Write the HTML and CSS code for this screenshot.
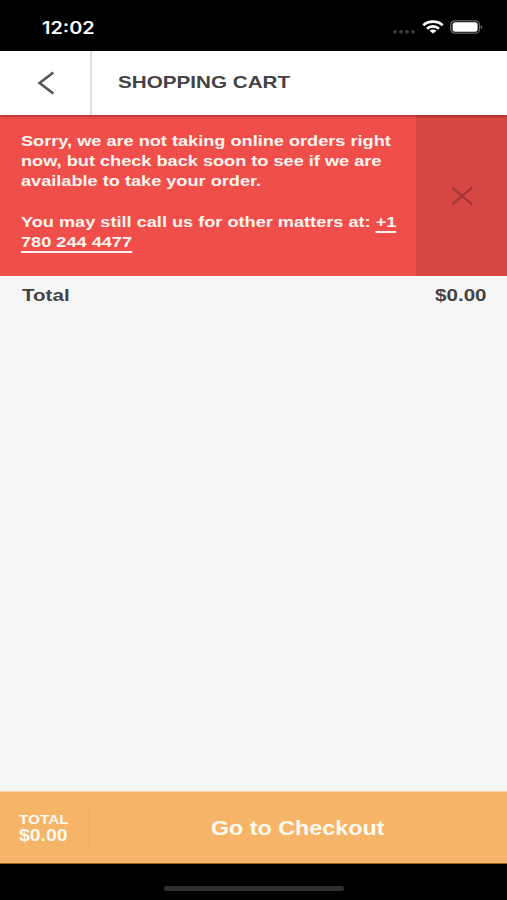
FILE: index.html
```html
<!DOCTYPE html>
<html lang="en">
<head>
<meta charset="utf-8">
<title>Shopping Cart</title>
<link rel="stylesheet" href="styles.css">
</head>
<body>
<div class="screen">
  <div class="status">
    <span class="wide time">12:02</span>
    <div class="indicators">
      <svg class="dots" width="24" height="6" viewBox="0 0 24 6" fill="#3c3c3c"><rect x="0" y="1" width="4" height="3.4" rx="1.5"/><rect x="6" y="1" width="4" height="3.4" rx="1.5"/><rect x="12" y="1" width="4" height="3.4" rx="1.5"/><rect x="18" y="1" width="4" height="3.4" rx="1.5"/></svg>
      <svg class="wifi" width="22" height="14" viewBox="0 0 22 14" fill="none" stroke="#fff" stroke-width="2.7"><path d="M1.3 5.2C6.500 .4 15.500 .4 20.700 5.200"/><path d="M5 8.700C8.400 5.700 13.600 5.700 17 8.700"/><path d="M11 13.500L7.500 10.800C9.400 9.100 12.600 9.100 14.500 10.800Z" fill="#fff" stroke="none"/></svg>
      <svg class="battery" width="33" height="14" viewBox="0 0 33 14"><rect x=".8" y=".8" width="28.600" height="12.400" rx="4" fill="none" stroke="#666" stroke-width="1.300"/><rect x="2.600" y="2.300" width="25" height="9.400" rx="2.500" fill="#fff"/><path d="M30.800 5C32.700 5.600 32.700 8.400 30.800 9Z" fill="#777"/></svg>
    </div>
  </div>
  <header class="header">
    <div class="back"><svg width="18" height="24" viewBox="0 0 18 24" fill="none" stroke="#555" stroke-width="2.600"><path d="M16.300 1.500L2.600 12L16.300 22.500"/></svg></div>
    <h1 class="wide title">SHOPPING CART</h1>
  </header>
  <section class="notice">
    <div class="message">
      <p class="wide">Sorry, we are not taking online orders right<br>now, but check back soon to see if we are<br>available to take your order.</p>
      <p class="wide">You may still call us for other matters at: <a>+1</a><br><a>780 244 4477</a></p>
    </div>
    <div class="close"><svg width="22" height="20" viewBox="0 0 22 20" fill="none" stroke="#a63535" stroke-width="2.400"><path d="M1.200 1.700L21 18.300M21 1.700L1.200 18.300"/></svg></div>
  </section>
  <main class="cart">
    <div class="row"><span class="wide">Total</span><span class="wide amount">$0.00</span></div>
  </main>
  <footer class="checkout">
    <div class="sum"><span class="wide label">TOTAL</span><span class="wide value">$0.00</span></div>
    <div class="action"><span class="wide">Go to Checkout</span></div>
  </footer>
  <div class="home"><div class="bar"></div></div>
</div>
</body>
</html>
```
FILE: styles.css
```css
* { box-sizing: border-box; }
body { margin: 0; font-family: "Liberation Sans", Arial, sans-serif; font-weight: 700; }
.screen { width: 507px; height: 900px; display: flex; flex-direction: column; overflow: hidden; background: #000; }
.wide { display: block; margin: 0; white-space: nowrap; transform: scaleX(1.21); transform-origin: left center; }
.status { height: 51px; flex: none; display: flex; justify-content: space-between; padding: 0 24px 0 42px; color: #fff; }
.time { font: 600 17px/20px Inter, sans-serif; margin-top: 18px; transform: scaleX(1.17); }
.indicators { display: flex; align-items: flex-start; }
.dots { margin-top: 29px; }
.wifi { margin: 20px 0 0 5px; }
.battery { margin: 20px 0 0 6px; }
.header { height: 64px; flex: none; display: flex; background: #fff; color: #444; position: relative; box-shadow: 0 1px 3px rgba(80, 0, 0, .5); }
.back { width: 92px; border-right: 2px solid #ddd; display: flex; align-items: center; padding-left: 37px; }
.title { font-size: 17px; line-height: 64px; margin-left: 26px; transform: scaleX(1.215); }
.notice { height: 161px; flex: none; display: flex; background: #f04e4b; color: #fff5ef; }
.message { flex: 1; padding: 16px 0 0 20.5px; font-size: 15px; line-height: 20.2px; }
.message p + p { margin-top: 20.2px; }
.message a { border-bottom: 2px solid #fff5ef; padding-bottom: 1px; }
.close { width: 91px; background: #d64642; display: flex; align-items: center; justify-content: center; }
.cart { flex: 1; background: #f6f6f6; color: #444; border-top: 1px solid #fff; }
.row { display: flex; justify-content: space-between; padding: 9px 20.5px 0 22px; font-size: 17px; line-height: 20px; }
.amount { transform-origin: right center; }
.checkout { height: 73px; flex: none; display: flex; align-items: center; background: #f5b468; color: #fffaf0; border-top: 1px solid #f8d5aa; border-bottom: 1px solid #94631d; }
.sum { width: 90px; height: 40px; padding: 0 0 0 19px; border-right: 1px solid #e8aa63; }
.label { font-size: 13px; line-height: 15px; margin-top: 4px; transform: scaleX(1.18); }
.value { font-size: 16px; line-height: 17px; }
.action { flex: 1; padding-left: 121px; font-size: 20px; line-height: 24px; }
.action .wide { transform: scaleX(1.165); }
.home { height: 36px; flex: none; display: flex; justify-content: center; padding-top: 22px; }
.bar { width: 180px; height: 5px; border-radius: 3px; background: #303030; }
```
